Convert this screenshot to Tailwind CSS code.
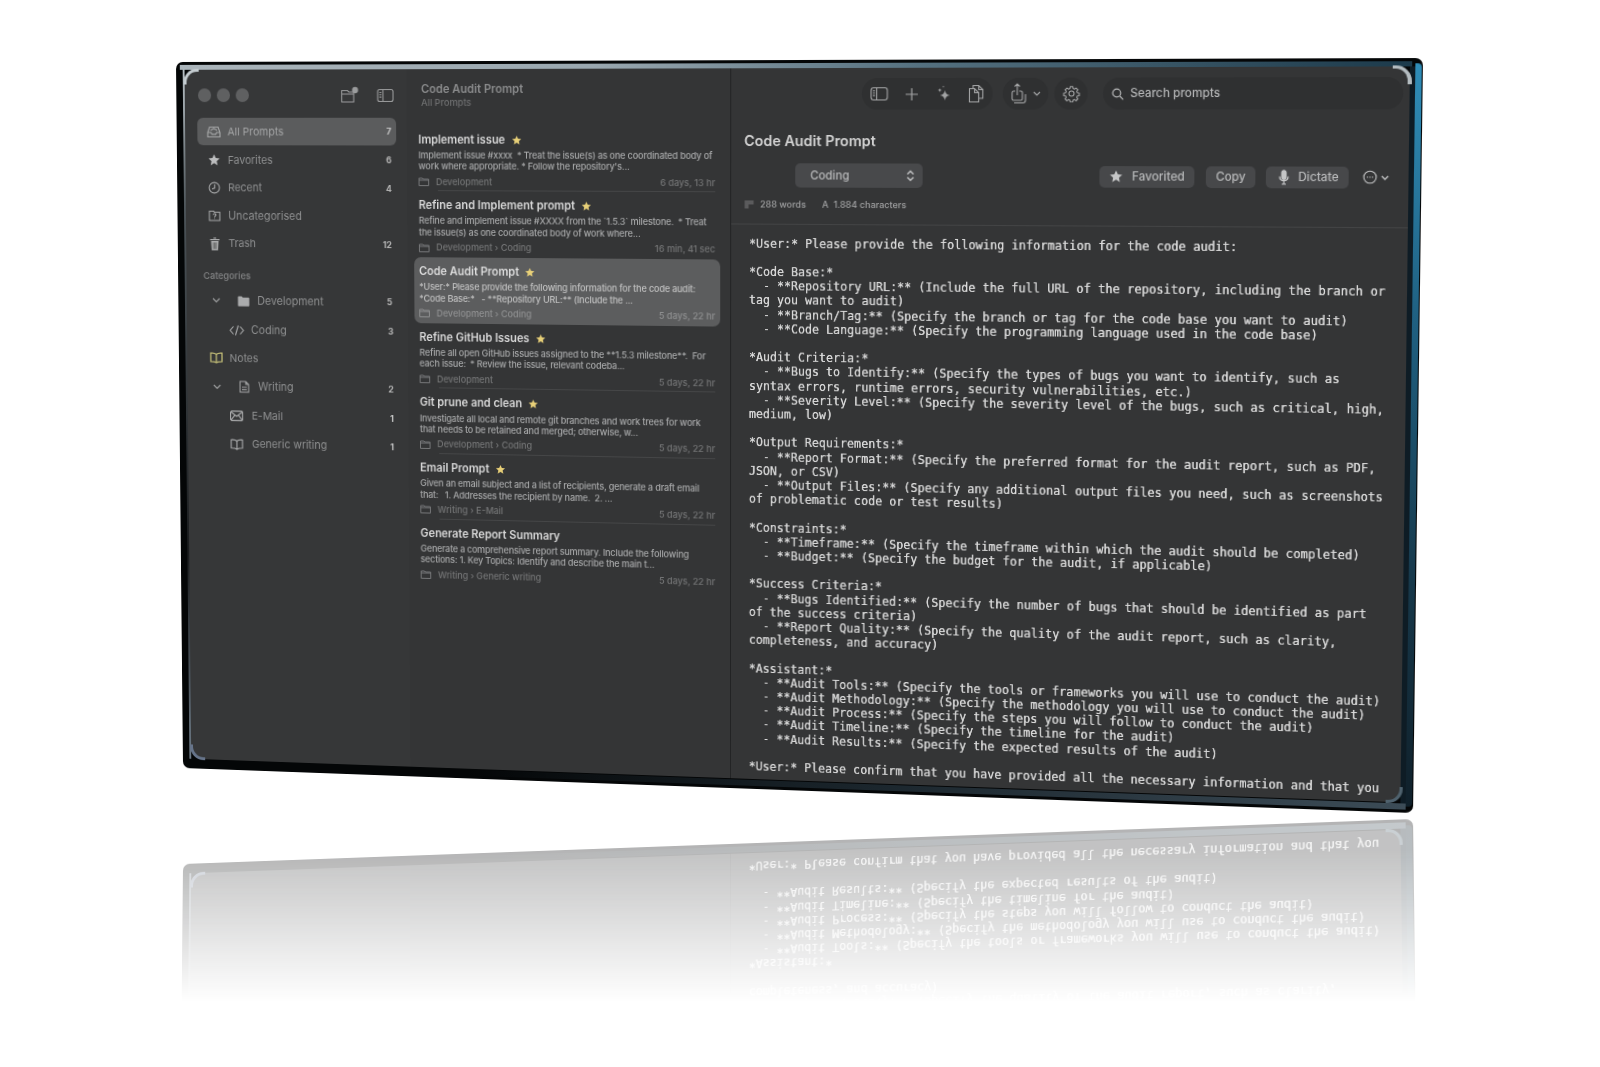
<!DOCTYPE html>
<html lang="en">
<head>
    <meta charset="UTF-8">
    <meta name="viewport" content="width=device-width, initial-scale=1.0">
    <script src="https://cdn.jsdelivr.net/npm/@tailwindcss/browser@4"></script>
    <title>Code Audit Prompt</title>
</head>
<body class="bg-white">
<div class="relative w-[1600px] h-[1067px] overflow-hidden bg-white">
    <!-- mirror of the window, filled in by the script below -->
    <div class="absolute inset-0 opacity-[0.3] blur-[0.4px] [mask-image:linear-gradient(to_bottom,black_850px,transparent_1003px)]">
        <div id="reflection" class="absolute inset-0 origin-[0_816px] [transform:scaleY(-1)]"></div>
    </div>

    <div id="win" class="absolute left-0 top-0 w-[1240px] h-[730px] origin-top-left [transform:matrix3d(0.930258,-0.006298,0,-0.00005298,0.01292,0.981102,0,0.0000182,0,0,1,0,176,62,0,1)] [font-family:Inter,sans-serif] blur-[0.45px]">
        <div class="relative w-full h-full bg-[#040607] rounded-[7px] pt-[8px] pl-[9px] pr-[12px] pb-[10px]">
            <!-- bezel -->
            <div class="absolute left-[4px] right-[10px] top-[3px] h-[5px] bg-[linear-gradient(to_right,#aab4ba,#9aa8b0_35%,#54707f_62%,#1c3a4b)]"></div>
            <div class="absolute right-[1px] top-[5px] bottom-[6px] w-[6px] rounded-r-[4px] bg-[linear-gradient(to_bottom,#2f8db8,#1f5f80_35%,#17384a_70%,#10202a)]"></div>
            <div class="absolute right-[7px] top-[8px] bottom-[6px] w-[5px] bg-[#0e1c25]"></div>
            <div class="absolute left-[300px] right-[7px] bottom-[3px] h-[6px] bg-[linear-gradient(to_right,#040607,#1b262d_45%,#3c4c57)]"></div>
            <div class="absolute left-[7px] top-[8px] bottom-[10px] w-[2px] bg-[linear-gradient(to_bottom,#b7c0c5,#4b5358_20%,#1a1c1e_70%,#6d7a86)]"></div>

            <div class="relative flex h-full rounded-[13px] overflow-hidden bg-[#343536]">
                <!-- sidebar -->
                <aside class="w-[233px] shrink-0 bg-[#363738] pl-[13px] pr-[11px] text-[11px] text-[#8f9091]">
                    <div class="flex items-center h-[49px] pt-[3px] pl-[1px]">
                        <span class="w-[14px] h-[14px] rounded-full bg-[#5f6061]"></span>
                        <span class="w-[14px] h-[14px] rounded-full bg-[#5f6061] ml-[6px]"></span>
                        <span class="w-[14px] h-[14px] rounded-full bg-[#5f6061] ml-[6px]"></span>
                        <svg class="ml-auto mr-[18px] text-[#9b9c9d]" width="20" height="18" viewBox="0 0 20 18" fill="none" stroke="currentColor" stroke-width="1.1"><path d="M1.5 4.5h6l1.5 1.5h5v10h-12.500z"/><path d="M1.500 8h12.500"/><circle cx="15.500" cy="4" r="2.600" fill="#9b9c9d"/></svg>
                        <svg class="mr-[2px] text-[#9b9c9d]" width="18" height="15" viewBox="0 0 18 15" fill="none" stroke="currentColor" stroke-width="1.1"><rect x="1" y="1.500" width="16" height="12" rx="2"/><path d="M6.500 1.500v12M2.800 4.500h2M2.800 6.800h2M2.800 9.100h2"/></svg>
                    </div>

                    <div class="flex items-center h-[28px] mb-[0.6px] rounded-[6px] bg-[#5b5c5d] pl-[10px] pr-[5px] text-[#a4a5a6]">
                        <svg class="w-[15px]" width="15" height="13" viewBox="0 0 15 13" fill="none" stroke="currentColor" stroke-width="1.2"><path d="M1 7l2-5.500h9l2 5.500v4.500h-13z"/><path d="M1 7h3.500l1 1.800h4l1-1.800h3.500M4 4.800l3.500-1.800 3.500 1.800"/></svg>
                        <span class="ml-[7px]">All Prompts</span>
                        <span class="ml-auto text-[9px] font-bold text-[#c5c5c5]">7</span>
                    </div>
                    <div class="flex items-center h-[28.6px] pl-[10px] pr-[5px]">
                        <svg class="w-[15px] text-[#bcbdbe]" width="14" height="14" viewBox="0 0 24 24" fill="currentColor"><path d="M12 2l3 6.600 7.200.8-5.400 4.800 1.500 7.100L12 17.700l-6.300 3.600 1.500-7.100L1.800 9.400 9 8.600z"/></svg>
                        <span class="ml-[7px]">Favorites</span>
                        <span class="ml-auto text-[9px] font-bold text-[#b5b5b5]">6</span>
                    </div>
                    <div class="flex items-center h-[28.6px] pl-[10px] pr-[5px]">
                        <svg class="w-[15px]" width="13" height="13" viewBox="0 0 13 13" fill="none" stroke="#aaabac" stroke-width="1.1"><circle cx="6.500" cy="6.500" r="5.400"/><path d="M6.800 3v3.800L4 7.800"/></svg>
                        <span class="ml-[7px]">Recent</span>
                        <span class="ml-auto text-[9px] font-bold text-[#b5b5b5]">4</span>
                    </div>
                    <div class="flex items-center h-[28.6px] pl-[10px] pr-[5px]">
                        <svg class="w-[15px]" width="13" height="12" viewBox="0 0 13 12" fill="none" stroke="#aaabac" stroke-width="1.1"><path d="M1 1.500h4.500l1 1h5.500v8.500h-11z"/><path d="M5 5.200c.2-1.600 3-1.500 3 .1 0 1-1.500 1-1.500 2.200M6.500 8.400v.8"/></svg>
                        <span class="ml-[7px] text-[11.2px]">Uncategorised</span>
                    </div>
                    <div class="flex items-center h-[28.6px] pl-[10px] pr-[5px]">
                        <svg class="w-[15px]" width="11" height="14" viewBox="0 0 11 14" fill="#aaabac"><path d="M0.500 2h10v1.200h-10zM4 0.500h3v1h-3zM1.500 4h8l-.6 9.500h-6.800z"/><path d="M4 5.500v6.500M5.500 5.500v6.500M7 5.500v6.500" stroke="#363738" stroke-width=".6"/></svg>
                        <span class="ml-[7px]">Trash</span>
                        <span class="ml-auto text-[9px] font-bold text-[#b5b5b5]">12</span>
                    </div>

                    <div class="h-[16px] leading-[16px] mt-[11px] pl-[5px] text-[9.5px] font-semibold text-[#7b7c7d]">Categories</div>

                    <div class="flex items-center h-[30.6px] mt-[1.9px] pr-[5px] pl-[14px]">
                        <svg class="w-[9px]" width="9" height="6" viewBox="0 0 9 6" fill="none" stroke="#a0a1a2" stroke-width="1.2"><path d="M1 1l3.500 3.500L8 1"/></svg>
                        <svg class="ml-[18px]" width="13" height="11" viewBox="0 0 13 11" fill="#aaabac"><path d="M0.500 1.500c0-.6.4-1 1-1h3l1.200 1.200h5.800c.6 0 1 .4 1 1v7c0 .6-.4 1-1 1h-10c-.6 0-1-.4-1-1z"/></svg>
                        <span class="ml-[8px] text-[11.2px]">Development</span>
                        <span class="ml-auto text-[9px] font-bold text-[#b5b5b5]">5</span>
                    </div>
                    <div class="flex items-center h-[29.4px] pr-[4px] pl-[32px]">
                        <svg width="16" height="11" viewBox="0 0 16 11" fill="none" stroke="#b0b1b2" stroke-width="1.1"><path d="M4.500 1.500L1 5.500l3.500 4M11.500 1.500l3.500 4-3.500 4M9.500.5l-3 10"/></svg>
                        <span class="ml-[7px] text-[11.2px]">Coding</span>
                        <span class="ml-auto text-[9px] font-bold text-[#b5b5b5]">3</span>
                    </div>
                    <div class="flex items-center h-[28px] pr-[4px] pl-[11px]">
                        <svg width="14" height="12" viewBox="0 0 14 12" fill="none" stroke="#c4bf78" stroke-width="1.3"><path d="M7 2.500C5.500 1 3 1 1 1.200v8.600c2 0 4.500 0 6 1.200 1.500-1.200 4-1.200 6-1.200V1.200C11 1 8.500 1 7 2.500zM7 2.500V11"/></svg>
                        <span class="ml-[7px]">Notes</span>
                    </div>
                    <div class="flex items-center h-[31.6px] pr-[4px] pl-[14px]">
                        <svg class="w-[9px]" width="9" height="6" viewBox="0 0 9 6" fill="none" stroke="#a0a1a2" stroke-width="1.2"><path d="M1 1l3.500 3.500L8 1"/></svg>
                        <svg class="ml-[19px]" width="11" height="13" viewBox="0 0 11 13" fill="none" stroke="#a5a6a7" stroke-width="1.1"><path d="M1 1h6l3 3v8H1zM7 1v3h3M3 7h5M3 9.500h5"/></svg>
                        <span class="ml-[9px] text-[11.2px]">Writing</span>
                        <span class="ml-auto text-[9px] font-bold text-[#b5b5b5]">2</span>
                    </div>
                    <div class="flex items-center h-[28.4px] pr-[4px] pl-[32px]">
                        <svg width="14" height="11" viewBox="0 0 14 11" fill="none" stroke="#b0b1b2" stroke-width="1.100"><rect x=".6" y=".6" width="12.800" height="9.800" rx="1.500"/><path d="M1 1.500l6 4.500 6-4.500M1 9.800l4-5M13 9.800l-4-5"/></svg>
                        <span class="ml-[9px]">E-Mail</span>
                        <span class="ml-auto text-[9px] font-bold text-[#c5c5c5]">1</span>
                    </div>
                    <div class="flex items-center h-[29.4px] pr-[4px] pl-[32px]">
                        <svg width="14" height="12" viewBox="0 0 14 12" fill="none" stroke="#b0b1b2" stroke-width="1.100"><path d="M7 2.500C5.500 1 3 1 1 1.200v8.600c2 0 4.500 0 6 1.200 1.500-1.200 4-1.200 6-1.200V1.200C11 1 8.500 1 7 2.500zM7 2.500V11"/></svg>
                        <span class="ml-[9px] text-[11px]">Generic writing</span>
                        <span class="ml-auto text-[9px] font-bold text-[#c5c5c5]">1</span>
                    </div>
                </aside>

                <!-- prompt list -->
                <section class="w-[330px] shrink-0 bg-[#343536]">
                    <div class="h-[56.5px] pl-[15px] pt-[13px]">
                        <div class="h-[15px] leading-[15px] text-[11.5px] font-semibold text-[#8a8b8c]">Code Audit Prompt</div>
                        <div class="h-[12px] leading-[12px] text-[9.5px] font-medium text-[#6e6f70]">All Prompts</div>
                    </div>

                    <div class="flex flex-col h-[66.7px] w-[313px] ml-[7px] px-[5px] pt-[7.5px]">
                        <div class="flex items-center h-[14px] text-[11.3px] font-semibold text-[#d8d8d8]">Implement issue<svg class="ml-[6px]" width="11" height="11" viewBox="0 0 24 24" fill="#e8d078"><path d="M12 2l3 6.600 7.200.8-5.400 4.800 1.500 7.100L12 17.700l-6.300 3.600 1.500-7.100L1.800 9.400 9 8.600z"/></svg></div>
                        <p class="mt-[2.75px] text-[9.2px] tracking-[-0.17px] leading-[11.5px] font-medium whitespace-pre text-[#a7a8a9]">Implement issue #xxxx  * Treat the issue(s) as one coordinated body of
work where appropriate. * Follow the repository's...</p>
                        <div class="flex items-center justify-between mt-[3.75px] h-[12px] text-[9.2px] font-medium text-[#747576]">
                            <span class="flex items-center"><svg class="mr-[7px]" width="11" height="9" viewBox="0 0 11 9" fill="none" stroke="#77787a"><path d="M.5 1h3.500l1 1h5.500v6.500h-10zM.5 3h10"/></svg>Development</span><span>6 days, 13 hr</span>
                        </div>
                        <div class="mt-auto ml-[20px] h-px bg-[#454647]"></div>
                    </div>

                    <div class="flex flex-col h-[66.7px] w-[313px] ml-[7px] px-[5px] pt-[7.5px]">
                        <div class="flex items-center h-[14px] text-[11.3px] font-semibold text-[#d8d8d8]">Refine and Implement prompt<svg class="ml-[6px]" width="11" height="11" viewBox="0 0 24 24" fill="#e8d078"><path d="M12 2l3 6.600 7.200.8-5.400 4.800 1.500 7.100L12 17.700l-6.300 3.600 1.500-7.100L1.800 9.400 9 8.600z"/></svg></div>
                        <p class="mt-[2.75px] text-[9.2px] tracking-[-0.17px] leading-[11.5px] font-medium whitespace-pre text-[#a7a8a9]">Refine and implement issue #XXXX from the `1.5.3` milestone.  * Treat
the issue(s) as one coordinated body of work where...</p>
                        <div class="flex items-center justify-between mt-[3.75px] h-[12px] text-[9.2px] font-medium text-[#747576]">
                            <span class="flex items-center"><svg class="mr-[7px]" width="11" height="9" viewBox="0 0 11 9" fill="none" stroke="#77787a"><path d="M.5 1h3.500l1 1h5.500v6.500h-10zM.5 3h10"/></svg>Development › Coding</span><span>16 min, 41 sec</span>
                        </div>
                    </div>

                    <div class="flex flex-col h-[66.7px] w-[313px] ml-[7px] px-[5px] pt-[7.5px] rounded-[7px] bg-[#5c5d5e]">
                        <div class="flex items-center h-[14px] text-[11.3px] font-semibold text-[#dcdcdc]">Code Audit Prompt<svg class="ml-[6px]" width="11" height="11" viewBox="0 0 24 24" fill="#e8d078"><path d="M12 2l3 6.600 7.200.8-5.400 4.800 1.500 7.100L12 17.700l-6.300 3.600 1.500-7.100L1.800 9.400 9 8.600z"/></svg></div>
                        <p class="mt-[2.75px] text-[9.2px] tracking-[-0.17px] leading-[11.5px] font-medium whitespace-pre text-[#c0c0c0]">*User:* Please provide the following information for the code audit:
*Code Base:*   - **Repository URL:** (Include the ...</p>
                        <div class="flex items-center justify-between mt-[3.75px] h-[12px] text-[9.2px] font-medium text-[#8f9091]">
                            <span class="flex items-center"><svg class="mr-[7px]" width="11" height="9" viewBox="0 0 11 9" fill="none" stroke="#8f9091"><path d="M.5 1h3.500l1 1h5.500v6.500h-10zM.5 3h10"/></svg>Development › Coding</span><span>5 days, 22 hr</span>
                        </div>
                    </div>

                    <div class="flex flex-col h-[66.7px] w-[313px] ml-[7px] px-[5px] pt-[7.5px]">
                        <div class="flex items-center h-[14px] text-[11.3px] font-semibold text-[#d8d8d8]">Refine GitHub Issues<svg class="ml-[6px]" width="11" height="11" viewBox="0 0 24 24" fill="#e8d078"><path d="M12 2l3 6.600 7.200.8-5.400 4.800 1.500 7.100L12 17.700l-6.300 3.600 1.500-7.100L1.800 9.400 9 8.600z"/></svg></div>
                        <p class="mt-[2.75px] text-[9.2px] tracking-[-0.17px] leading-[11.5px] font-medium whitespace-pre text-[#a7a8a9]">Refine all open GitHub issues assigned to the **1.5.3 milestone**.  For
each issue:  * Review the issue, relevant codeba...</p>
                        <div class="flex items-center justify-between mt-[3.75px] h-[12px] text-[9.2px] font-medium text-[#747576]">
                            <span class="flex items-center"><svg class="mr-[7px]" width="11" height="9" viewBox="0 0 11 9" fill="none" stroke="#77787a"><path d="M.5 1h3.500l1 1h5.500v6.500h-10zM.5 3h10"/></svg>Development</span><span>5 days, 22 hr</span>
                        </div>
                        <div class="mt-auto ml-[20px] h-px bg-[#454647]"></div>
                    </div>

                    <div class="flex flex-col h-[66.7px] w-[313px] ml-[7px] px-[5px] pt-[7.5px]">
                        <div class="flex items-center h-[14px] text-[11.3px] font-semibold text-[#d8d8d8]">Git prune and clean<svg class="ml-[6px]" width="11" height="11" viewBox="0 0 24 24" fill="#e8d078"><path d="M12 2l3 6.600 7.200.8-5.400 4.800 1.500 7.100L12 17.700l-6.300 3.600 1.500-7.100L1.800 9.400 9 8.600z"/></svg></div>
                        <p class="mt-[2.75px] text-[9.2px] tracking-[-0.17px] leading-[11.5px] font-medium whitespace-pre text-[#a7a8a9]">Investigate all local and remote git branches and work trees for work
that needs to be retained and merged; otherwise, w...</p>
                        <div class="flex items-center justify-between mt-[3.75px] h-[12px] text-[9.2px] font-medium text-[#747576]">
                            <span class="flex items-center"><svg class="mr-[7px]" width="11" height="9" viewBox="0 0 11 9" fill="none" stroke="#77787a"><path d="M.5 1h3.500l1 1h5.500v6.500h-10zM.5 3h10"/></svg>Development › Coding</span><span>5 days, 22 hr</span>
                        </div>
                        <div class="mt-auto ml-[20px] h-px bg-[#454647]"></div>
                    </div>

                    <div class="flex flex-col h-[66.7px] w-[313px] ml-[7px] px-[5px] pt-[7.5px]">
                        <div class="flex items-center h-[14px] text-[11.3px] font-semibold text-[#d8d8d8]">Email Prompt<svg class="ml-[6px]" width="11" height="11" viewBox="0 0 24 24" fill="#e8d078"><path d="M12 2l3 6.600 7.200.8-5.400 4.800 1.500 7.100L12 17.700l-6.300 3.600 1.500-7.100L1.800 9.400 9 8.600z"/></svg></div>
                        <p class="mt-[2.75px] text-[9.2px] tracking-[-0.17px] leading-[11.5px] font-medium whitespace-pre text-[#a7a8a9]">Given an email subject and a list of recipients, generate a draft email
that:   1. Addresses the recipient by name.  2. ...</p>
                        <div class="flex items-center justify-between mt-[3.75px] h-[12px] text-[9.2px] font-medium text-[#747576]">
                            <span class="flex items-center"><svg class="mr-[7px]" width="11" height="9" viewBox="0 0 11 9" fill="none" stroke="#77787a"><path d="M.5 1h3.500l1 1h5.500v6.500h-10zM.5 3h10"/></svg>Writing › E-Mail</span><span>5 days, 22 hr</span>
                        </div>
                        <div class="mt-auto ml-[20px] h-px bg-[#454647]"></div>
                    </div>

                    <div class="flex flex-col h-[66.7px] w-[313px] ml-[7px] px-[5px] pt-[7.5px]">
                        <div class="flex items-center h-[14px] text-[11.3px] font-semibold text-[#d8d8d8]">Generate Report Summary</div>
                        <p class="mt-[2.75px] text-[9.2px] tracking-[-0.17px] leading-[11.5px] font-medium whitespace-pre text-[#a7a8a9]">Generate a comprehensive report summary. Include the following
sections: 1. Key Topics: Identify and describe the main t...</p>
                        <div class="flex items-center justify-between mt-[3.75px] h-[12px] text-[9.2px] font-medium text-[#747576]">
                            <span class="flex items-center"><svg class="mr-[7px]" width="11" height="9" viewBox="0 0 11 9" fill="none" stroke="#77787a"><path d="M.5 1h3.500l1 1h5.500v6.500h-10zM.5 3h10"/></svg>Writing › Generic writing</span><span>5 days, 22 hr</span>
                        </div>
                    </div>
                </section>

                <!-- detail -->
                <main class="flex-1 min-w-0 flex flex-col bg-[#343536] border-l border-[#222324]">
                    <div class="flex h-[49px] pt-[10px] pl-[130px] pr-[6px] text-[#a3a4a5]">
                        <div class="flex items-center justify-between w-[128px] h-[31px] px-[8px] rounded-full bg-[#2f3031]">
                            <svg width="18" height="15" viewBox="0 0 18 15" fill="none" stroke="currentColor" stroke-width="1.100"><rect x="1" y="1.500" width="16" height="12" rx="2.500"/><path d="M6.500 1.500v12M2.800 4.500h2M2.800 6.800h2M2.800 9.100h2"/></svg>
                            <svg width="14" height="14" viewBox="0 0 14 14" fill="none" stroke="currentColor" stroke-width="1.200"><path d="M7 1v12M1 7h12"/></svg>
                            <svg width="16" height="18" viewBox="0 0 16 18" fill="currentColor"><path d="M9.500 5c.6 3.200 1.800 4.400 5 5-3.200.6-4.400 1.800-5 5-.6-3.200-1.800-4.400-5-5 3.200-.6 4.400-1.800 5-5zM4.500 3c.2 1.200.8 1.800 2 2-1.200.2-1.800.8-2 2-.2-1.200-.8-1.800-2-2 1.200-.2 1.800-.8 2-2zM8 .5c.1.700.4 1 1 1.100-.6.100-.9.400-1 1.100-.1-.700-.4-1-1-1.100.6-.1.900-.4 1-1.100z"/></svg>
                            <svg width="16" height="19" viewBox="0 0 16 19" fill="none" stroke="currentColor" stroke-width="1.100"><path d="M5 4V1.500h5.500l4 4V14H11"/><path d="M10.500 1.500v4h4"/><path d="M1.500 4.500h5l4 4v9h-9zM6.500 4.500v4h4"/></svg>
                        </div>
                        <div class="flex items-center justify-center gap-[5px] w-[44px] h-[31px] ml-[10px] rounded-full bg-[#2f3031]">
                            <svg width="17" height="21" viewBox="0 0 17 21" fill="none" stroke="currentColor" stroke-width="1.100"><path d="M5 8H3.500a1.500 1.500 0 0 0-1.500 1.500v6A1.500 1.500 0 0 0 3.500 17h7a1.500 1.500 0 0 0 1.500-1.500v-6A1.500 1.500 0 0 0 10.500 8H9M7 12V1M4.500 3.500L7 1l2.500 2.500"/><path d="M4 19.500h8.500a2.500 2.500 0 0 0 2.500-2.500v-6"/></svg>
                            <svg width="8" height="5" viewBox="0 0 8 5" fill="none" stroke="currentColor" stroke-width="1.100"><path d="M1 1l3 3 3-3"/></svg>
                        </div>
                        <div class="flex items-center justify-center w-[32px] h-[31px] ml-[6px] rounded-full bg-[#2f3031]">
                            <svg width="17" height="17" viewBox="0 0 24 24" fill="none" stroke="currentColor" stroke-width="1.500"><path d="M10.300 2.500h3.400l.5 2.600 1.900.8 2.200-1.500 2.400 2.400-1.500 2.200.8 1.900 2.600.5v3.400l-2.600.5-.8 1.900 1.500 2.200-2.400 2.400-2.200-1.500-1.900.8-.5 2.600h-3.400l-.5-2.600-1.900-.8-2.200 1.500-2.400-2.400 1.500-2.200-.8-1.900-2.600-.5v-3.400l2.600-.5.8-1.900-1.500-2.200 2.400-2.400 2.200 1.500 1.900-.8z"/><circle cx="12" cy="12" r="3.500"/></svg>
                        </div>
                        <div class="flex items-center flex-1 h-[31px] ml-[15px] pl-[8px] rounded-full bg-[#2f3031] text-[11.3px] font-medium text-[#b4b5b6]">
                            <svg class="mr-[6px]" width="12" height="12" viewBox="0 0 12 12" fill="none" stroke="#b4b5b6" stroke-width="1.200"><circle cx="5" cy="5" r="3.800"/><path d="M8 8l3.300 3.300"/></svg>Search prompts
                        </div>
                    </div>

                    <h1 class="h-[20px] leading-[20px] mt-[13px] pl-[13px] text-[14.3px] font-semibold text-[#d2d2d2]">Code Audit Prompt</h1>

                    <div class="flex items-center h-[24px] mt-[12px] pl-[64px] pr-[18px] text-[11.3px] font-medium text-[#b9babb]">
                        <div class="flex items-center justify-between w-[127px] h-[24px] pl-[15px] pr-[8px] rounded-[5px] bg-[#48494b]">
                            Coding
                            <svg width="8" height="12" viewBox="0 0 8 12" fill="none" stroke="#c5c6c7" stroke-width="1.300"><path d="M1 4.500L4 1.500l3 3M1 7.500l3 3 3-3"/></svg>
                        </div>
                        <div class="flex items-center ml-[172px] w-[91px] h-[21px] pl-[9px] rounded-[5px] bg-[#47484a]">
                            <svg class="mr-[8px]" width="14" height="14" viewBox="0 0 24 24" fill="#c5c6c7"><path d="M12 2l3 6.600 7.200.8-5.400 4.800 1.500 7.100L12 17.700l-6.300 3.600 1.500-7.100L1.800 9.400 9 8.600z"/></svg>Favorited
                        </div>
                        <div class="flex items-center justify-center ml-[11px] w-[48px] h-[21px] rounded-[5px] bg-[#47484a]">Copy</div>
                        <div class="flex items-center ml-[10px] w-[78px] h-[21px] pl-[12px] rounded-[5px] bg-[#47484a]">
                            <svg class="mr-[8px]" width="10" height="15" viewBox="0 0 10 15" fill="none" stroke="#c5c6c7" stroke-width="1.200"><rect x="3" y=".8" width="4" height="8.500" rx="2" fill="#c5c6c7"/><path d="M1 6.500c0 5.500 8 5.500 8 0M5 11v3M3 14h4"/></svg>Dictate
                        </div>
                        <div class="flex items-center ml-[13px] gap-[3px]">
                            <svg width="14" height="14" viewBox="0 0 14 14" fill="none" stroke="#c0c1c2" stroke-width="1.100"><circle cx="7" cy="7" r="5.800"/><path d="M4 7h1.200M6.400 7h1.200M8.800 7H10"/></svg>
                            <svg width="8" height="5" viewBox="0 0 8 5" fill="none" stroke="#c0c1c2" stroke-width="1.300"><path d="M1 1l3 3 3-3"/></svg>
                        </div>
                    </div>

                    <div class="flex items-center h-[12px] mt-[11px] pl-[13px] text-[9px] font-medium text-[#a0a1a2]">
                        <svg class="mr-[6px]" width="10" height="9" viewBox="0 0 10 9" fill="none" stroke="#818283"><path d="M.5 1h9M.5 3h9M.5 5h4M.5 7h4"/></svg>288 words
                        <span class="ml-[16px] mr-[5px]">A</span>1.884 characters
                    </div>

                    <div class="h-px mt-[13px] bg-[#434445]"></div>

                    <pre class="pt-[11.5px] pl-[18px] overflow-hidden text-[11.65px] leading-[14.2px] font-medium text-[#dadada] [text-shadow:0_0_0.5px_#dadada] [font-family:'DejaVu_Sans_Mono',monospace]">*User:* Please provide the following information for the code audit:

*Code Base:*
  - **Repository URL:** (Include the full URL of the repository, including the branch or
tag you want to audit)
  - **Branch/Tag:** (Specify the branch or tag for the code base you want to audit)
  - **Code Language:** (Specify the programming language used in the code base)

*Audit Criteria:*
  - **Bugs to Identify:** (Specify the types of bugs you want to identify, such as
syntax errors, runtime errors, security vulnerabilities, etc.)
  - **Severity Level:** (Specify the severity level of the bugs, such as critical, high,
medium, low)

*Output Requirements:*
  - **Report Format:** (Specify the preferred format for the audit report, such as PDF,
JSON, or CSV)
  - **Output Files:** (Specify any additional output files you need, such as screenshots
of problematic code or test results)

*Constraints:*
  - **Timeframe:** (Specify the timeframe within which the audit should be completed)
  - **Budget:** (Specify the budget for the audit, if applicable)

*Success Criteria:*
  - **Bugs Identified:** (Specify the number of bugs that should be identified as part
of the success criteria)
  - **Report Quality:** (Specify the quality of the audit report, such as clarity,
completeness, and accuracy)

*Assistant:*
  - **Audit Tools:** (Specify the tools or frameworks you will use to conduct the audit)
  - **Audit Methodology:** (Specify the methodology you will use to conduct the audit)
  - **Audit Process:** (Specify the steps you will follow to conduct the audit)
  - **Audit Timeline:** (Specify the timeline for the audit)
  - **Audit Results:** (Specify the expected results of the audit)

*User:* Please confirm that you have provided all the necessary information and that you</pre>
                </main>
            </div>

            <!-- light catch on the window corners -->
            <div class="absolute left-[8px] top-[7px] w-[16px] h-[16px] rounded-tl-[14px] border-l-[3px] border-t-[3px] border-[#c4ccd0]"></div>
            <div class="absolute right-[10px] top-[7px] w-[18px] h-[18px] rounded-tr-[15px] border-r-[4px] border-t-[3px] border-[#b4bcc0]"></div>
            <div class="absolute left-[8px] bottom-[9px] w-[16px] h-[16px] rounded-bl-[14px] border-l-[3px] border-b-[3px] border-[#66748a]"></div>
            <div class="absolute right-[10px] bottom-[9px] w-[16px] h-[16px] rounded-br-[14px] border-r-[3px] border-b-[3px] border-[#4f626e]"></div>
        </div>
    </div>
</div>
<script>
    // the reflection only shows the lower part of the window: drop the text that falls off the page
    const copy = document.getElementById("win").cloneNode(true);
    copy.removeAttribute("id");
    copy.setAttribute("aria-hidden", "true");
    const walker = document.createTreeWalker(copy, NodeFilter.SHOW_TEXT);
    while (walker.nextNode()) {
        const node = walker.currentNode;
        if (node.parentElement.tagName === "PRE") {
            node.nodeValue = node.nodeValue.split("\n").map((line, i) => i < 25 ? "" : line).join("\n");
        } else {
            node.nodeValue = "";
        }
    }
    document.getElementById("reflection").appendChild(copy);
</script>
</body>
</html>
